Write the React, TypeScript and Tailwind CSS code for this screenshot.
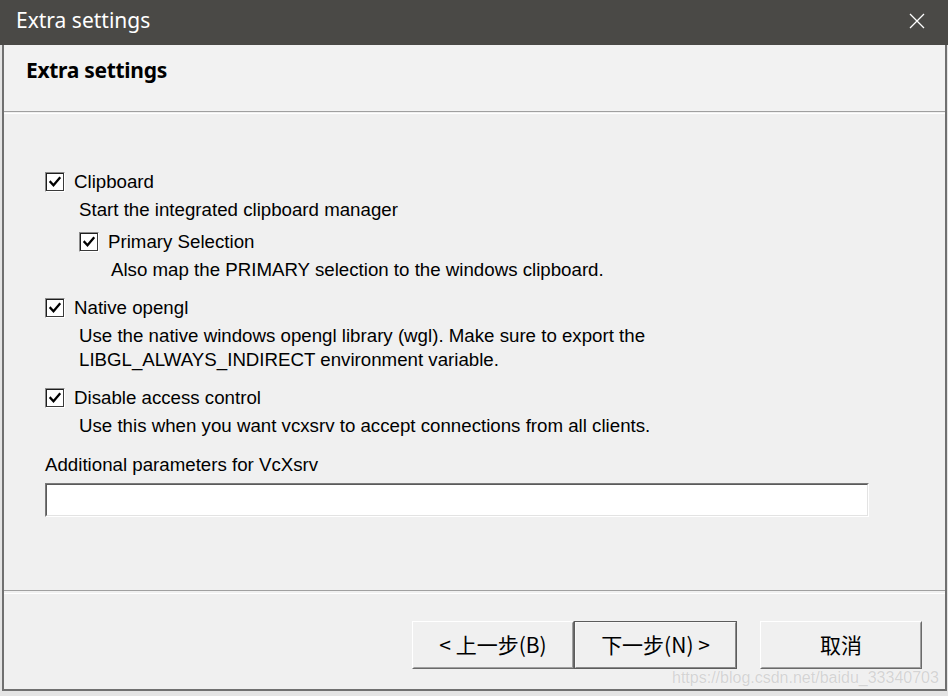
import React from "react";

function Check() {
  return (
    <div className="w-[20px] h-[20px] border border-t-[#8a8a8a] border-l-[#8a8a8a] border-b-white border-r-white shrink-0">
      <div className="w-full h-full border border-t-[#1e1e1e] border-l-[#1e1e1e] border-b-[#3a3a3a] border-r-[#3a3a3a] bg-white flex items-center justify-center">
        <svg width="14" height="14" viewBox="0 0 14 14">
          <polyline points="2.5,7 5.5,10.2 11.5,3.2" fill="none" stroke="#000" strokeWidth="2.3" strokeLinecap="square" />
        </svg>
      </div>
    </div>
  );
}

const ms = { fontFamily: '"Liberation Sans", Arial, sans-serif' };

function Btn({ label, primary }: { label: string; primary?: boolean }) {
  return (
    <div
      className={
        primary
          ? "w-[163px] h-[48px] border border-[#5c5c5c] bg-[#f0f0f0]"
          : "w-[162px] h-[48px] border border-t-white border-l-white border-b-[#6a6a6a] border-r-[#6a6a6a] bg-[#f0f0f0]"
      }
    >
      <div
        className={
          primary
            ? "w-full h-full border border-t-[#f8f8f8] border-l-[#f8f8f8] border-b-[#8a8a8a] border-r-[#8a8a8a] flex items-center justify-center text-[21px] text-black"
            : "w-full h-full border border-t-[#f0f0f0] border-l-[#f0f0f0] border-b-[#a0a0a0] border-r-[#a0a0a0] flex items-center justify-center text-[21px] text-black"
        }
        style={{ fontFamily: '"Noto Sans CJK SC", "Noto Sans", sans-serif' }}
      >
        {label}
      </div>
    </div>
  );
}

export default function App() {
  return (
    <div className="w-[948px] h-[696px] bg-[#e4e4e4] relative overflow-hidden flex flex-col">
      <div className="h-[45px] w-full bg-[#4a4946] flex items-center justify-between pl-[16px] pr-[23px] pb-[3px] shrink-0">
        <span className="text-white text-[21px]" style={{ fontFamily: '"Noto Sans", "Open Sans", sans-serif' }}>
          Extra settings
        </span>
        <svg width="16" height="16" viewBox="0 0 16 16">
          <path d="M1 1 L15 15 M15 1 L1 15" stroke="#fff" strokeWidth="1.3" />
        </svg>
      </div>
      <div className="ml-[2px] w-[945px] h-[646px] border-l-2 border-r-2 border-b-2 border-[#707070] bg-[#f0f0f0] flex flex-col shrink-0">
        <div className="h-[66px] bg-[#f2f2f2] pl-[22px] pt-[10px] shrink-0">
          <span className="text-[21px] font-bold text-black tracking-[-0.3px]" style={{ fontFamily: '"Noto Sans", "Open Sans", sans-serif' }}>
            Extra settings
          </span>
        </div>
        <div className="h-[1px] bg-[#a0a0a0] shrink-0" />
        <div className="h-[1px] bg-[#f0f0f0] shrink-0" />
        <div className="h-[1px] bg-white shrink-0" />
        <div className="flex flex-col pl-[41px] pt-[56px] text-black text-[18.7px]" style={ms}>
          <div className="h-[24px] flex items-center gap-[9px]">
            <Check />
            <span>Clipboard</span>
          </div>
          <div className="h-[24px] mt-[4px] flex items-center pl-[34px]">Start the integrated clipboard manager</div>
          <div className="h-[24px] mt-[8px] flex items-center gap-[9px] pl-[34px]">
            <Check />
            <span>Primary Selection</span>
          </div>
          <div className="h-[24px] mt-[4px] flex items-center pl-[66px]">Also map the PRIMARY selection to the windows clipboard.</div>
          <div className="h-[24px] mt-[14px] flex items-center gap-[9px]">
            <Check />
            <span>Native opengl</span>
          </div>
          <div className="h-[24px] mt-[4px] flex items-center pl-[34px]">Use the native windows opengl library (wgl). Make sure to export the</div>
          <div className="h-[24px] flex items-center pl-[34px]">LIBGL_ALWAYS_INDIRECT environment variable.</div>
          <div className="h-[24px] mt-[14px] flex items-center gap-[9px]">
            <Check />
            <span>Disable access control</span>
          </div>
          <div className="h-[24px] mt-[4px] flex items-center pl-[34px]">Use this when you want vcxsrv to accept connections from all clients.</div>
          <div className="h-[24px] mt-[15px] flex items-center">Additional parameters for VcXsrv</div>
          <div className="mt-[6px] w-[824px] h-[34px] border border-t-[#7a7a7a] border-l-[#7a7a7a] border-b-white border-r-white">
            <div className="w-full h-full border border-t-[#5a5a5a] border-l-[#5a5a5a] border-b-[#e3e3e3] border-r-[#e3e3e3] bg-white" />
          </div>
        </div>
        <div className="flex-1" />
        <div className="h-[1px] bg-[#a0a0a0] shrink-0" />
        <div className="h-[2px] bg-[#f0f0f0] shrink-0" />
        <div className="h-[1px] bg-white shrink-0" />
        <div className="h-[95px] flex items-start pt-[27px] pl-[408px] shrink-0">
          <Btn label="< 上一步(B)" />
          <Btn label="下一步(N) >" primary />
          <div className="w-[23px]" />
          <Btn label="取消" />
        </div>
      </div>
      <div
        className="absolute left-[672px] top-[666px] text-[16px] text-[#d4d4d4]"
        style={{ fontFamily: '"Liberation Sans", Arial, sans-serif', textShadow: "0 0 1px #fff" }}
      >
        https://blog.csdn.net/baidu_33340703
      </div>
    </div>
  );
}
